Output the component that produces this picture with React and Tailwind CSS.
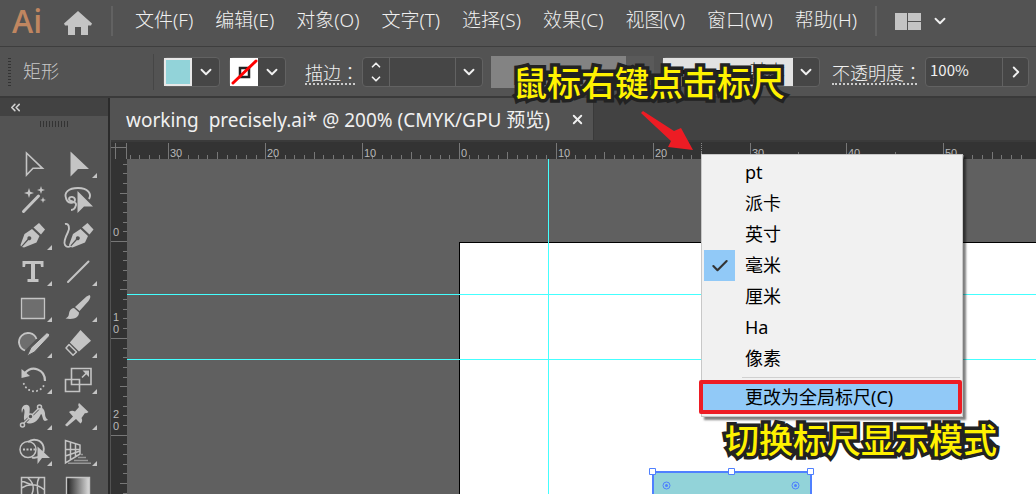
import { ChevronDown, ChevronUp, ChevronRight, ChevronsLeft, Check, X } from "lucide-react";

const MENUS = ["文件(F)", "编辑(E)", "对象(O)", "文字(T)", "选择(S)", "效果(C)", "视图(V)", "窗口(W)", "帮助(H)"];
const UNITS = ["pt", "派卡", "英寸", "毫米", "厘米", "Ha", "像素"];

const C = "#c4c4c4";

const TOOLS = [
  ["选择工具", false, <path d="M10.500 7v22l6.500-6.700h9.500z" fill="none" stroke={C} strokeWidth="1.600" />],
  ["直接选择工具", true, <path d="M9.500 5.500v25l7.500-7.500h11z" fill={C} />],
  ["魔棒工具", false, <g fill={C}><path d="M7.500 29.500L22.500 14" stroke={C} strokeWidth="3" strokeLinecap="round" /><path d="M13 6l1.200 3.800L18 11l-3.800 1.200L13 16l-1.200-3.800L8 11l3.800-1.200zM25 4l1 3 3 1-3 1-1 3-1-3-3-1 3-1zM27 15l.8 2.200 2.200.8-2.200.8L27 21l-.8-2.200L24 18l2.200-.8z" /></g>],
  ["套索工具", false, <g fill="none" stroke={C} strokeWidth="1.900"><path d="M28 17c3-5-1-11-11-11S3 11 5 16c1 6 9 6 9 2s-6-4-6-1 8 2 7 6-3 5-5 5" /><path d="M16.500 9v22l6.500-6.500h9z" fill={C} stroke="none" /></g>],
  ["钢笔工具", true, <PenNib />],
  ["曲率工具", false, <g><path d="M4 6c4-1 5 4 3 8s-5 10-3 13 4 2 6 1" fill="none" stroke={C} strokeWidth="1.900" /><g transform="translate(3.500 0)"><PenNib /></g></g>],
  ["文字工具", true, <path d="M6.500 7h21v6h-2.500l-.5-3H19v15h3.500v3h-11v-3H15V10H9.500L9 13H6.500z" fill={C} />],
  ["直线段工具", true, <path d="M7 28L27.500 7.500" stroke={C} strokeWidth="2" strokeLinecap="round" />],
  ["矩形工具", true, <path d="M5.500 8.500h23v20h-23z" fill="#6e6e6e" stroke={C} strokeWidth="1.300" />],
  ["画笔工具", true, <g fill={C}><path d="M28.500 5c1.500 1 1 3-1 6l-9 10-4.500-4L25.500 6.500zM13 18l5 4.500c0 5-5 7.500-13.500 6 4-2 3-4 4-7 1-2 2.500-3.500 4.500-3.500z" /></g>],
  ["Shaper 工具", true, <g><path d="M9 24.500A9 9 0 1 1 20.500 13" fill="#6e6e6e" stroke={C} strokeWidth="1.800" /><path d="M11 30l4-8.500L30.500 7c2-.5 3.500 1 3 3L18.500 26z" fill={C} stroke="#535353" /></g>],
  ["橡皮擦工具", true, <g><path d="M19.500 4L30 14.700 18 25.500 8.800 16.500z" fill={C} /><path d="M8 18.500l7.500 7.500-3.500 3.300L5 22z" fill="none" stroke={C} strokeWidth="1.500" strokeLinejoin="round" /></g>],
  ["旋转工具", true, <g fill="none" stroke={C} strokeWidth="2.200"><path d="M9 11c7-8 20-4 20 8" /><path d="M27.500 24c-4 7-16 8-20-3" strokeWidth="2" strokeLinecap="round" strokeDasharray="0.1 4" /><path d="M5.500 7v9l8.500-2z" fill={C} stroke="none" /></g>],
  ["比例缩放工具", true, <g fill="none" stroke={C} strokeWidth="1.600"><path d="M10.500 6.500h19.500v16H10.500zM4.500 17.500h14v12h-14zM21 15.500l5-5" /><path d="M21.500 8.500h6.500v6.500z" fill={C} stroke="none" /></g>],
  ["宽度工具", true, <g fill="none" stroke={C} strokeWidth="1.500"><path d="M6 15C4 8 10 5 13 8c2 3-1 8 2 10 3 0 3-3 5-6 3-4 8-3 9 3 0 4 1 5 3 7l-3 1c-3-1-2-6-4-7-3 7-8 11-14 9-6-3-1-10-3-14-1-1-1 1-2 4z" fill={C} stroke="none" /><path d="M7 26L23 10" stroke="#535353" strokeWidth="3" /><path d="M7 26L23 10" /><circle cx="6.500" cy="27" r="2" fill="#535353" /><circle cx="14.500" cy="18.500" r="2.500" fill="#535353" /><circle cx="23.500" cy="9" r="2" fill="#535353" /></g>],
  ["操控变形工具", true, <path d="M18 5l9.500 9c-1 1-2 1.500-3.500 1l-3.500 5c1 2 1 4-1 5.500l-4.500-4.500-9 7.500-2-1.500 8-8.500-4-4.500c2-1.500 4-1.500 6-.5l4-4.500c-1-1-1-3 0-4z" fill={C} />],
  ["形状生成器工具", true, <g><circle cx="12" cy="15.500" r="8" fill="none" stroke={C} strokeWidth="1.500" /><path d="M12 8a9.500 9 0 1 1 4 15.500" fill="none" stroke={C} strokeWidth="1.900" /><path d="M7 15.500h13" stroke={C} strokeWidth="2" strokeDasharray="2 1.500" /><path d="M21.500 12.500v17.500l4.500-6h8z" fill={C} /></g>],
  ["透视网格工具", true, <g fill="none" stroke={C} strokeWidth="1.500"><path d="M4.500 6.500v22.500l14.500-9v-9zM9.500 8.500v17M14.500 10v13M4.500 15.500H19M4.500 22l14.500-5" /><path d="M20 20.500h2M17 23.500h8M13 26.500h14M7 29.300h23" opacity=".6" /></g>],
  ["网格工具", false, <g fill="none" stroke={C} strokeWidth="1.500"><path d="M5.500 7.500h23v22h-23zM5.500 18c8-5 16-4 23 2M12 8c7 6 7 14 0 22M5 11c6 1 8 4 13 4M23 8c-2 3-2 12 0 22" /></g>],
  ["渐变工具", false, <g><defs><linearGradient id="toolGradient"><stop stopColor="#222" /><stop offset="1" stopColor="#ddd" /></linearGradient></defs><path d="M5.500 7.500h23v22h-23z" fill="url(#toolGradient)" stroke={C} strokeWidth="1.400" /></g>],
];

function PenNib() {
  return (
    <g fill={C}>
      <path d="M23 5l6 6.500-4 5-7.500-7z" />
      <path d="M16 11l7.500 7-3 6.500L8 29.500 6 29l6.500-7a2 2 0 1 0-1-1L5 28.500l-.5-1.500L8.500 16z" />
    </g>
  );
}

function Tool({ tool }) {
  const [label, nested, art] = tool;
  return (
    <button aria-label={label} className="flex h-9 justify-center">
      <svg viewBox="0 0 36 36" className="h-9 w-9 overflow-visible">
        {art}
        {nested && <path d="M36 27v5h-5z" fill={C} />}
      </svg>
    </button>
  );
}

const STEP = 9.685;

function range(from, to) {
  return Array.from({ length: Math.max(0, to - from) }, (_, n) => from + n);
}

function TopRuler() {
  const ticks = range(-34, Math.floor((window.innerWidth - 127 - 332) / STEP));
  return (
    <svg className="h-[17px] w-full bg-[#333333]">
      {ticks.map((i) => {
        const x = Math.round(332 + i * STEP) + 0.5;
        const top = i % 10 === 0 ? 1 : i % 5 === 0 ? 10 : 13;
        return <path key={i} d={`M${x} ${top}V17`} stroke="#777" />;
      })}
      {ticks.filter((i) => i % 10 === 0).map((i) => (
        <text key={i} x={Math.round(334 + i * STEP)} y="15" fill="#b8b8b8" className="font-['Liberation_Sans',sans-serif] text-[11px]">{Math.abs(i)}</text>
      ))}
      <path d="M574.500 1V17" stroke="#888" strokeDasharray="1 1" />
    </svg>
  );
}

function LeftRuler() {
  const ticks = range(-8, Math.floor((window.innerHeight - 159 - 82) / STEP) + 1);
  return (
    <svg className="h-full w-4 shrink-0 bg-[#333333]">
      {ticks.map((i) => {
        const y = Math.round(82 + i * STEP) + 0.5;
        const left = i % 10 === 0 ? 0 : i % 5 === 0 ? 9 : 12;
        return <path key={i} d={`M${left} ${y}H16`} stroke="#777" />;
      })}
      {ticks.filter((i) => i % 10 === 0).map((i) =>
        String(i).split("").map((digit, n, all) => (
          <text key={`${i}-${n}`} x="2" y={Math.round(77 + i * STEP) - (all.length - 1 - n) * 12} fill="#b8b8b8" className="font-['Liberation_Sans',sans-serif] text-[11px]">{digit}</text>
        ))
      )}
    </svg>
  );
}

function Swatch({ label, children }) {
  return (
    <button aria-label={label} className="flex h-[30px] w-[57px] shrink-0 items-center rounded border border-[#626262] bg-[#464646]">
      {children}
      <span className="flex flex-1 justify-center"><ChevronDown size={18} strokeWidth={2.5} /></span>
    </button>
  );
}

function FieldLabel({ htmlFor, children, className }) {
  return (
    <label htmlFor={htmlFor} className={`shrink-0 whitespace-nowrap border-b-2 border-dotted border-[#cccccc] pt-0.5 text-[18px] leading-[22px] font-['Noto_Sans_CJK_SC',sans-serif] font-light ${className}`}>
      {children}<span className="font-['Noto_Sans_CJK_TC',sans-serif]">：</span>
    </label>
  );
}

function Callout({ children, className }) {
  return (
    <div className={`absolute z-20 whitespace-nowrap text-[34px] leading-10 font-medium text-[#fff200] [paint-order:stroke_fill] [-webkit-text-stroke:7px_#222222] font-['Noto_Sans_CJK_SC',sans-serif] ${className}`}>
      {children}
    </div>
  );
}

export default function App() {
  return (
    <div className="relative flex h-screen flex-col overflow-hidden bg-[#535353] text-[18px] text-[#f0f0f0] font-['Noto_Sans','Noto_Sans_CJK_SC',sans-serif]">
      <header className="flex h-[47px] shrink-0 items-center border-b border-[#3e3e3e] pb-1 pl-3">
        <span className="w-[52px] text-[32px] leading-10 font-semibold text-[#c08660] font-['Open_Sans',sans-serif]">Ai</span>
        <button aria-label="主页" className="mt-1 mr-[19px]">
          <svg viewBox="0 0 28 24" className="h-6 w-7"><path d="M14 0l14 12.500-1 2H24V24h-7v-8h-6v8H4v-9.500H1l-1-2z" fill={C} /></svg>
        </button>
        <span className="h-[30px] w-0.5 bg-[#626262]" />
        <nav className="ml-[22px] flex gap-[22px] pb-0.5 text-[19px] font-light">
          {MENUS.map((m) => <button key={m} className="whitespace-nowrap">{m}</button>)}
        </nav>
        <span className="ml-[18px] h-[30px] w-0.5 bg-[#626262]" />
        <button aria-label="排列文档" className="ml-[18px] flex items-center gap-2.5">
          <svg viewBox="0 0 26 17" className="h-[17px] w-[26px]"><path d="M0 0h12v17H0zM13 0h13v8H13zM13 9h13v8H13z" fill={C} /></svg>
          <ChevronDown size={18} strokeWidth={2.5} />
        </button>
      </header>

      <section className="flex h-[51px] shrink-0 items-center border-b-2 border-[#3a3a3a] pl-2">
        <span className="h-7 w-[3px] bg-[repeating-linear-gradient(#333_0_1px,transparent_1px_3px)]" />
        <span className="ml-3 w-[130px] font-light text-[#c8c8c8]">矩形</span>
        <span className="mr-[9px] h-9 w-px bg-[#464646]" />
        <Swatch label="填色"><span className="h-7 w-7 border-2 border-[#e8e8e8] bg-[#92d3d9]" /></Swatch>
        <span className="w-[9px]" />
        <Swatch label="描边颜色">
          <svg viewBox="0 0 28 28" className="h-7 w-7 bg-white"><path d="M10 10h9v9h-9z" fill="none" stroke="#222" strokeWidth="2.500" /><path d="M3 25L26 3" stroke="#f00" strokeWidth="3" strokeLinecap="round" /></svg>
        </Swatch>
        <FieldLabel htmlFor="stroke-weight" className="ml-[19px] w-[50px]">描边</FieldLabel>
        <div className="ml-[7px] flex h-[30px] w-[121px] shrink-0 rounded border border-[#626262] bg-[#464646]">
          <div className="flex w-[27px] flex-col items-center border-r border-[#626262]">
            <button aria-label="增加"><ChevronUp size={14} strokeWidth={3} /></button>
            <button aria-label="减少"><ChevronDown size={14} strokeWidth={3} /></button>
          </div>
          <input id="stroke-weight" className="w-[65px] min-w-0 bg-transparent px-1" />
          <button aria-label="描边粗细" className="flex flex-1 items-center justify-center border-l border-[#626262]"><ChevronDown size={18} strokeWidth={2.5} /></button>
        </div>
        <span className="ml-2 h-8 w-[135px] bg-[#838383]" />
        <span className="h-8 w-7 bg-[#5a5a5a]" />
        <button className="ml-2 flex h-[30px] w-[158px] shrink-0 items-center rounded border border-[#626262] bg-[#464646]">
          <span className="flex h-7 w-[130px] items-center justify-end gap-2 bg-[#e2e2e2] pr-2 font-light text-[#333333]"><span className="h-1 w-16 bg-black" />基本</span>
          <span className="flex flex-1 justify-center"><ChevronDown size={18} strokeWidth={2.5} /></span>
        </button>
        <FieldLabel htmlFor="opacity" className="ml-3 w-[85px]">不透明度</FieldLabel>
        <div className="ml-2 flex h-[30px] w-[104px] shrink-0 rounded border border-[#626262] bg-[#464646]">
          <input id="opacity" defaultValue="100%" className="w-[76px] min-w-0 bg-transparent pb-0.5 pl-1 text-[15px] font-['Noto_Sans_CJK_SC',sans-serif]" />
          <button aria-label="不透明度选项" className="flex flex-1 items-center justify-center border-l border-[#626262]"><ChevronRight size={18} strokeWidth={2.5} /></button>
        </div>
      </section>

      <div className="flex min-h-0 flex-1">
        <aside className="w-[110px] shrink-0 overflow-hidden border-r-2 border-[#2b2b2b]">
          <button aria-label="折叠" className="flex h-[18px] w-full items-center bg-[#424242] pl-2"><ChevronsLeft size={15} strokeWidth={2.5} className="text-[#d0d0d0]" /></button>
          <div className="mx-auto mt-[5px] h-1.5 w-7 bg-[repeating-linear-gradient(90deg,#333_0_1px,transparent_1px_3px)]" />
          <div className="mt-[19px] ml-[11px] grid w-[90px] grid-cols-2">
            {TOOLS.map((t) => <Tool key={t[0]} tool={t} />)}
          </div>
        </aside>

        <main className="flex min-w-0 flex-1 flex-col pl-px">
          <div className="flex h-11 shrink-0 border-b-2 border-[#3a3a3a] bg-[#424242]">
            <div className="flex items-center gap-5 border-r border-[#3a3a3a] bg-[#535353] pr-2 pl-[15px]">
              <span className="whitespace-pre pt-0.5 text-[19px]">working  precisely.ai* @ 200% (CMYK/GPU 预览)</span>
              <button aria-label="关闭"><X size={15} strokeWidth={3} /></button>
            </div>
          </div>
          <div className="flex h-[17px] shrink-0">
            <svg className="h-[17px] w-4 shrink-0 bg-[#333333]"><path d="M4.500 1V17M15.500 1V17M0 5.500H16" stroke="#777" /></svg>
            <TopRuler />
          </div>
          <div className="flex min-h-0 flex-1">
            <LeftRuler />
            <div className="relative flex-1 overflow-hidden bg-[#606060]">
              <div className="absolute top-[83px] right-0 bottom-0 left-[332px] border-t border-l border-black bg-white" />
              <div className="absolute top-[135px] h-px w-full bg-[#44ffff]" />
              <div className="absolute top-[200px] h-px w-full bg-[#44ffff]" />
              <div className="absolute left-[421px] h-full w-px bg-[#44ffff]" />
              <svg className="absolute top-[308px] left-[521px] h-32 w-[168px]">
                <path d="M5 5h158v130H5z" fill="#92d3d9" stroke="#4f80ff" strokeWidth="2" />
                <path d="M1.500 1.500h6v6h-6zM80.500 1.500h6v6h-6zM159.500 1.500h6v6h-6z" fill="#fff" stroke="#4f80ff" />
                <g fill="none" stroke="#4f80ff"><circle cx="18.500" cy="18.500" r="3.500" /><circle cx="147.500" cy="18.500" r="3.500" /></g>
                <g fill="#4f80ff"><circle cx="18.500" cy="18.500" r="1.500" /><circle cx="147.500" cy="18.500" r="1.500" /></g>
              </svg>
            </div>
          </div>
        </main>
      </div>

      <div role="menu" className="absolute top-[154px] left-[701px] z-10 flex w-[262px] flex-col border border-[#c8c8c8] bg-[#f1f1f1] pt-[2px] pb-0.5 text-black shadow-[3px_3px_2px_rgba(0,0,0,0.5)]">
        {UNITS.map((u) => (
          <button key={u} role="menuitemradio" aria-checked={u === "毫米"} className="flex h-[31px] items-center pl-0.5 text-left">
            <span className={`mr-2.5 flex h-[31px] w-[31px] items-center justify-center ${u === "毫米" ? "bg-[#91c9f7]" : ""}`}>
              {u === "毫米" && <Check size={20} strokeWidth={2.5} className="text-[#333333]" />}
            </span>
            {u}
          </button>
        ))}
        <span className="mt-[3px] mr-0.5 ml-10 h-px bg-[#d0d0d0]" />
        <button role="menuitem" className="mt-0.5 -ml-[3px] h-[34px] rounded-xs border-4 border-[#ed1c24] bg-[#91c9f7] pl-[42px] text-left leading-[26px]">更改为全局标尺(C)</button>
      </div>

      <svg viewBox="0 0 56 40" className="absolute top-[111px] left-[640px] z-20 h-10 w-14"><path d="M3 0l31 20 7-3 12 22-25-3 3-6L1 2z" fill="#ed1c24" /></svg>
      <Callout className="top-[62px] left-[513px]">鼠标右键点击标尺</Callout>
      <Callout className="top-[419px] left-[725px]">切换标尺显示模式</Callout>
    </div>
  );
}
